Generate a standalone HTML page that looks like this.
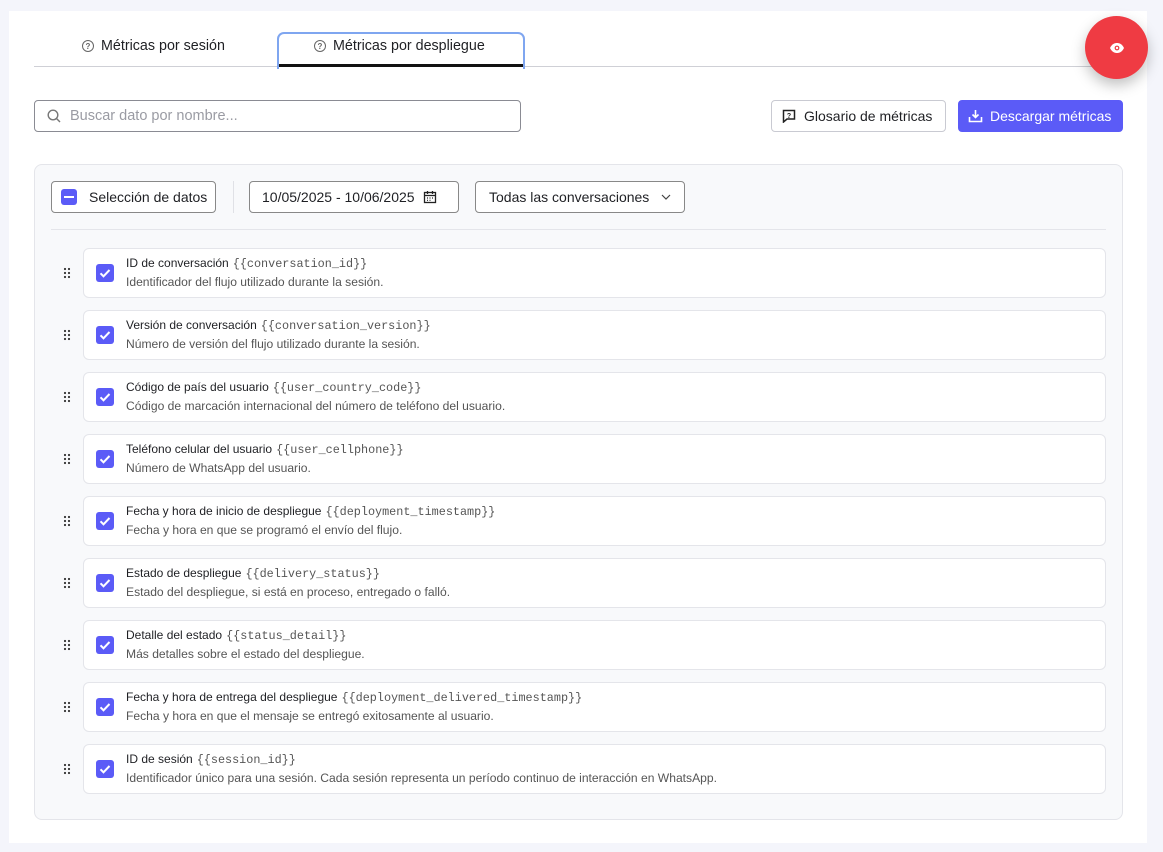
<!DOCTYPE html>
<html><head><meta charset="utf-8"><style>
*{box-sizing:border-box;margin:0;padding:0}
body{width:1163px;height:852px;background:#f4f5fb;font-family:"Liberation Sans",sans-serif;color:#1f2024;position:relative;overflow:hidden}
.card{position:absolute;left:9px;top:11px;width:1138px;height:832px;background:#fff}
.abs{position:absolute}
.tabline{left:34px;top:66px;width:1089px;height:1px;background:#cfd0d6}
.tab{font-size:14.3px;display:flex;align-items:center;gap:7px}
.q{width:12px;height:12px;border:1.2px solid #666;border-radius:50%;font-size:8px;display:flex;align-items:center;justify-content:center;color:#666;font-weight:bold}
.btn{border:1px solid #c9cad2;border-radius:4px;background:#fff;display:flex;align-items:center;font-size:14px}
.panel{left:34px;top:164px;width:1089px;height:656px;background:#f8f9fb;border:1px solid #e4e5ea;border-radius:8px}
.row{position:absolute;left:83px;width:1023px;height:50px;background:#fff;border:1px solid #e4e5ea;border-radius:6px}
.chk{position:absolute;left:12px;top:15px;width:18px;height:18px;background:#5b5bf7;border-radius:3px}
.t1{position:absolute;left:42px;top:7px;font-size:12px;color:#1f2024}
.t1 code{font-family:"Liberation Mono",monospace;font-size:11.8px;color:#555;margin-left:4px}
.t2{position:absolute;left:42px;top:26px;font-size:12.1px;color:#555}
.drag{position:absolute;left:63px;width:8px;height:12px}
.fab{left:1085px;top:16px;width:63px;height:63px;border-radius:50%;background:#ef3b43;box-shadow:0 6px 14px rgba(0,0,0,.25);display:flex;align-items:center;justify-content:center}
</style></head><body>
<div class="card"></div>
<div class="abs tabline"></div>
<div class="abs tab" style="left:82px;top:38px"><span class="q">?</span>Métricas por sesión</div>
<div class="abs" style="left:277px;top:32px;width:248px;height:37px;border:2px solid #7fa6f0;border-bottom:none;border-radius:7px 7px 0 0;background:#fff"></div>
<div class="abs" style="left:279px;top:64px;width:244px;height:3px;background:#111"></div>
<div class="abs tab" style="left:314px;top:38px"><span class="q">?</span>Métricas por despliegue</div>
<div class="abs fab"><svg width="16" height="12" viewBox="0 0 16 12"><path d="M1 6C3 2 5.5 1 8 1s5 1 7 5c-2 4-4.5 5-7 5S3 10 1 6z" fill="#fff"/><circle cx="8" cy="6" r="2.4" fill="#ef3b43"/><circle cx="8" cy="6" r="1.2" fill="#fff"/></svg></div>

<div class="abs btn" style="left:34px;top:100px;width:487px;height:32px;border-color:#8a8b93;color:#9a9ba3;font-size:14.5px">
<svg style="margin:0 9px 0 12px" width="14" height="14" viewBox="0 0 14 14"><circle cx="6" cy="6" r="4.8" fill="none" stroke="#777" stroke-width="1.4"/><path d="M9.5 9.5L13 13" stroke="#777" stroke-width="1.4"/></svg>Buscar dato por nombre...</div>
<div class="abs btn" style="left:771px;top:100px;width:175px;height:32px;padding-left:10px;font-size:14px"><svg width="14" height="14" viewBox="0 0 14 14" style="margin-right:8px"><path d="M1.5 1.5h11v8.5H5L1.5 13z" fill="none" stroke="#222" stroke-width="1.5"/><text x="7" y="8.8" font-size="7" text-anchor="middle" font-weight="bold" fill="#222" font-family="Liberation Sans">?</text></svg>Glosario de métricas</div>
<div class="abs btn" style="left:958px;top:100px;width:165px;height:32px;background:#5b5bf7;border-color:#5b5bf7;color:#fff;padding-left:9px"><svg width="15" height="14" viewBox="0 0 15 14" style="margin-right:7px"><path d="M7.5 1v7M4.5 5.5l3 3 3-3M1.5 8v4.5h12V8" fill="none" stroke="#fff" stroke-width="1.6"/></svg>Descargar métricas</div>

<div class="abs panel"></div>
<div class="abs btn" style="left:51px;top:181px;width:165px;height:32px;border-color:#888;padding-left:9px"><span style="width:16px;height:16px;background:#5b5bf7;border-radius:3px;margin-right:12px;position:relative"><span style="position:absolute;left:3px;top:7px;width:10px;height:2px;background:#fff"></span></span>Selección de datos</div>
<div class="abs" style="left:233px;top:181px;width:1px;height:32px;background:#e0e1e6"></div>
<div class="abs btn" style="left:249px;top:181px;width:210px;height:32px;border-color:#888;padding-left:12px">10/05/2025 - 10/06/2025<svg width="14" height="14" viewBox="0 0 14 14" style="margin-left:8px"><rect x="1.5" y="2.5" width="11" height="10" fill="none" stroke="#222" stroke-width="1.3"/><path d="M1.5 5.5h11M4.5 1v3M9.5 1v3" stroke="#222" stroke-width="1.3"/><path d="M4 8h1M6.5 8h1M9 8h1M4 10.3h1M6.5 10.3h1" stroke="#222" stroke-width="1.2"/></svg></div>
<div class="abs btn" style="left:475px;top:181px;width:210px;height:32px;border-color:#888;padding-left:13px">Todas las conversaciones<svg width="10" height="6" viewBox="0 0 10 6" style="margin-left:12px"><path d="M1 1l4 4 4-4" fill="none" stroke="#444" stroke-width="1.2"/></svg></div>
<div class="abs" style="left:51px;top:229px;width:1055px;height:1px;background:#e4e5ea"></div>

<div id="rows"></div>
<script>
const d=[["ID de conversación","conversation_id","Identificador del flujo utilizado durante la sesión."],
["Versión de conversación","conversation_version","Número de versión del flujo utilizado durante la sesión."],
["Código de país del usuario","user_country_code","Código de marcación internacional del número de teléfono del usuario."],
["Teléfono celular del usuario","user_cellphone","Número de WhatsApp del usuario."],
["Fecha y hora de inicio de despliegue","deployment_timestamp","Fecha y hora en que se programó el envío del flujo."],
["Estado de despliegue","delivery_status","Estado del despliegue, si está en proceso, entregado o falló."],
["Detalle del estado","status_detail","Más detalles sobre el estado del despliegue."],
["Fecha y hora de entrega del despliegue","deployment_delivered_timestamp","Fecha y hora en que el mensaje se entregó exitosamente al usuario."],
["ID de sesión","session_id","Identificador único para una sesión. Cada sesión representa un período continuo de interacción en WhatsApp."]];
let h="";d.forEach((r,i)=>{const y=248+i*62;
h+=`<svg class="drag" style="top:${y+19}px" viewBox="0 0 8 12"><g fill="#333"><circle cx="2" cy="2" r="1.1"/><circle cx="6" cy="2" r="1.1"/><circle cx="2" cy="6" r="1.1"/><circle cx="6" cy="6" r="1.1"/><circle cx="2" cy="10" r="1.1"/><circle cx="6" cy="10" r="1.1"/></g></svg>
<div class="row" style="top:${y}px"><div class="chk"><svg width="18" height="18" viewBox="0 0 18 18"><path d="M4.5 9.3l3 3 6-6.3" fill="none" stroke="#fff" stroke-width="2"/></svg></div><div class="t1">${r[0]}<code>{{${r[1]}}}</code></div><div class="t2">${r[2]}</div></div>`;});
document.getElementById("rows").innerHTML=h;
</script>
</body></html>
